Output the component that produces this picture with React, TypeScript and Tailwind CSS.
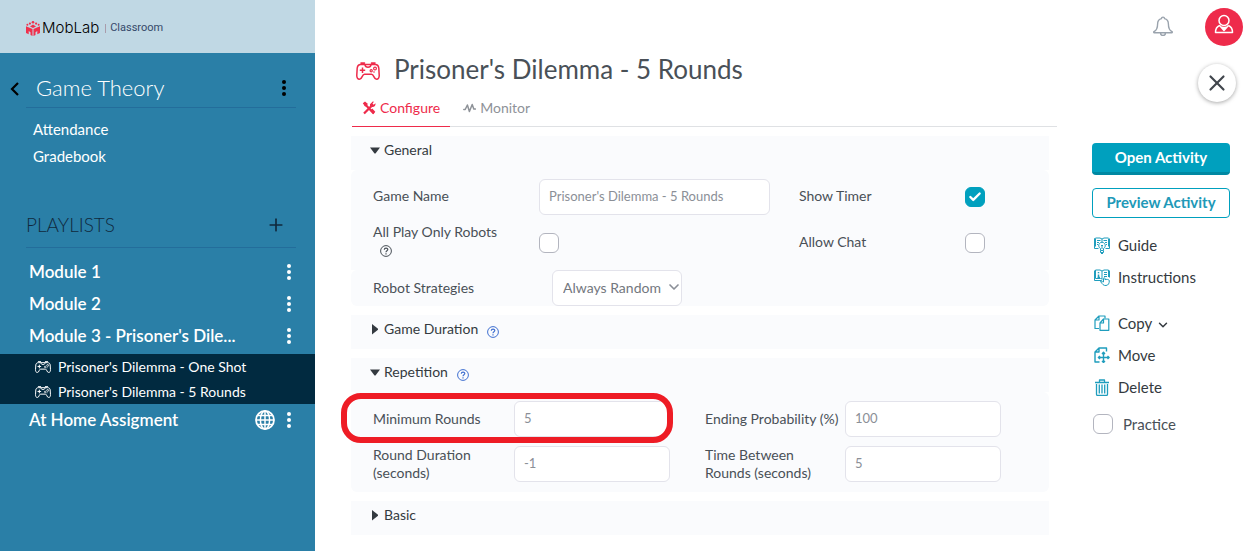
import React from 'react';
import { Check, ChevronDown, Plus, X } from 'lucide-react';

type IconProps = { className?: string };

function Gamepad({ className }: IconProps) {
  return (
    <svg viewBox="0 0 24 18" fill="none" stroke="currentColor" className={className} aria-hidden="true">
      <path
        strokeWidth="1.5"
        strokeLinecap="round"
        strokeLinejoin="round"
        d="M4.500 2.500C2.500 2.500 1.500 4 1.200 6L.8 13c-.2 2.500.9 4.200 2.700 4.200 3 0 2.300-5 5-5h7c2.700 0 2 5 5 5 1.800 0 2.900-1.700 2.700-4.200L22.800 6c-.3-2-1.300-3.500-3.300-3.500ZM5 1h3.500M15.500 1H19"
      />
      <path strokeWidth="1.500" d="M6.500 5.500v5.500M3.800 8.200h5.400M9 2.800c.3 2 1 2.400 3 2.400s2.700-.4 3-2.400" />
      <circle cx="15.200" cy="8.800" r="1.100" strokeWidth="1.200" />
      <circle cx="19" cy="6.600" r="1.400" strokeWidth="1.200" />
      <circle cx="18" cy="10" r=".8" fill="currentColor" stroke="none" />
    </svg>
  );
}

function LogoMark({ className }: IconProps) {
  return (
    <svg viewBox="0 0 14 15" fill="#f0304c" className={className} aria-hidden="true">
      <path d="M0 5.200 6.500 8v7l-2-1v-2.800L2.700 10v3.200L0 12ZM14 5.200 7.500 8v7l2-1v-2.800l1.800-1.200v3.200L14 12Z" />
      <path d="m7 3.600 3 1.800-3 1.500-3-1.500Z" />
      <circle cx="7" cy="1.300" r="1.300" />
      <circle cx="3.900" cy="2.600" r="1.100" />
      <circle cx="10.100" cy="2.600" r="1.100" />
      <circle cx="1.400" cy="3.800" r="1" />
      <circle cx="12.600" cy="3.800" r="1" />
    </svg>
  );
}

function GlobeIcon({ className }: IconProps) {
  return (
    <svg viewBox="0 0 20 20" fill="none" stroke="currentColor" strokeWidth="1.500" className={className} aria-hidden="true">
      <circle cx="10" cy="10" r="9" strokeWidth="1.800" />
      <ellipse cx="10" cy="10" rx="4.600" ry="9" />
      <path d="M10 1v18M1 10h18M2.500 5.500h15M2.500 14.500h15" />
    </svg>
  );
}

function BellIcon({ className }: IconProps) {
  return (
    <svg viewBox="0 0 20 20" fill="none" stroke="currentColor" strokeWidth="1.400" strokeLinejoin="round" className={className} aria-hidden="true">
      <path d="M8.500 2.600a1.500 1.500 0 0 1 3 0c2.700.7 3.900 3 3.900 5.400 0 4.300.6 6.200 3.600 7.700.5.300.4 1-.3 1H1.300c-.7 0-.8-.7-.3-1C4 14.200 4.600 12.300 4.600 8c0-2.400 1.200-4.700 3.900-5.400ZM7.500 17a2.500 2.500 0 0 0 5 0" />
    </svg>
  );
}

function UserIcon({ className }: IconProps) {
  return (
    <svg viewBox="0 0 20 20" fill="none" stroke="currentColor" strokeWidth="1.500" strokeLinejoin="round" className={className} aria-hidden="true">
      <circle cx="10" cy="6.500" r="5" />
      <path d="M5.600 11.500C3 12.500 1.500 14.500 1.500 18.500h17c0-4-1.500-6-4.100-7M5.600 11.500l4.400 5 4.400-5M7 13l3 .8 3-.8M10 14v2" />
    </svg>
  );
}

function ToolsIcon({ className }: IconProps) {
  return (
    <svg viewBox="0 0 14 14" className={className} aria-hidden="true">
      <path fill="none" stroke="currentColor" strokeWidth="2.200" d="M2.800 3 11.800 12.400M2 12.600 9.500 5" />
      <path fill="currentColor" d="M.8 2.200 3 .5l3 2.600L3.200 5.800ZM8 3.200 10.700.6 12 .8 10.500 2.500l1.200 1.200 1.800-1.400c.4 2.700-1.700 4.200-4 3.500L8 5ZM8.200 9.600l2-2 3.100 3.200-2 2.400Z" />
    </svg>
  );
}

function PulseIcon({ className }: IconProps) {
  return (
    <svg viewBox="0 0 13 10" fill="none" stroke="currentColor" strokeWidth="1.500" strokeLinejoin="round" strokeLinecap="round" className={className} aria-hidden="true">
      <path d="M.8 6.500h1.400L4.400 2l2 6.500L9.200 1.500l1.600 4.500h1.600" />
    </svg>
  );
}

function HelpIcon({ className }: IconProps) {
  return (
    <svg viewBox="0 0 12 12" fill="none" stroke="currentColor" className={className} aria-hidden="true">
      <circle cx="6" cy="6" r="5.400" strokeWidth="1" />
      <path strokeWidth="1.200" d="M4.300 4.800c0-2.200 3.500-2.200 3.500-.2C7.800 5.800 6 5.800 6 7.300M6 8.200v1.200" />
    </svg>
  );
}

function GuideIcon({ className }: IconProps) {
  return (
    <svg viewBox="0 0 16 17" fill="none" stroke="currentColor" strokeWidth="1" className={className} aria-hidden="true">
      <path d="M4.500 11.500H.5V1.500h1M15.500 1.500v10h-4M1.500 1.500v8M14.500 1.500v8M1.500 1H6l2 1 2-1h4.500M8 2v3M3 3.500h3.500M3 5.500h2M9.500 3.500H13M11 5.500h2M3 7.500h1M12 7.500h1" />
      <path d="M6.500 13v-1.500a3.300 3.300 0 1 1 3 0V13M6.500 13.500h3v2h-3ZM8 12V9M7 8.500h2M7 16.500h2" />
    </svg>
  );
}

function InstructionsIcon({ className }: IconProps) {
  return (
    <svg viewBox="0 0 16 17" fill="none" stroke="currentColor" strokeWidth="1" className={className} aria-hidden="true">
      <path d="M.5 1.500v10h7l1-.8M15.500 8.500v-7M1.500 1H6l2 1 2-1h4.500v7M1.500 1v8.500h5L8 10V2M10 3.500h3M10 5.500h3M10 7.500h3" />
      <path strokeWidth="1.500" d="M4.500 5.500v3M4.500 3v1.200M3.500 8.500h2.500" />
      <path d="M6.500 12.500c1-.7 2 .5 3 .5V9.500c0-1 1.500-1 1.500 0v1.200c1-.7 4.300-.3 4.300 1 0 2.500-.7 4.500-3.300 4.800-2.500.2-3.500-1.200-5.500-4Z" />
    </svg>
  );
}

function CopyIcon({ className }: IconProps) {
  return (
    <svg viewBox="0 0 16 16" fill="none" stroke="currentColor" strokeWidth="1.200" strokeLinejoin="round" className={className} aria-hidden="true">
      <path d="M5 13.500H1V5l4-4h6v2.500M5 1v4H1" />
      <path d="M9.500 4h5.300v11.300H6V8l3.500-4v4H6" />
    </svg>
  );
}

function MoveIcon({ className }: IconProps) {
  return (
    <svg viewBox="0 0 16 16" fill="none" stroke="currentColor" strokeWidth="1.400" strokeLinejoin="round" className={className} aria-hidden="true">
      <path d="M5.500 15H1V5l4-4h7.500v3.500M5 1v4H1" />
      <path d="M9.500 5.500v10M4.500 10.500h10.500M8 7l1.500-1.700L11 7M8 14l1.500 1.500L11 14M6 9l-1.600 1.500L6 12M13.500 9l1.600 1.500L13.500 12" />
    </svg>
  );
}

function TrashIcon({ className }: IconProps) {
  return (
    <svg viewBox="0 0 16 17" fill="none" stroke="currentColor" strokeWidth="1.300" strokeLinejoin="round" className={className} aria-hidden="true">
      <path d="M1 3.500h14M5.500 3V1h5v2M2.500 5v10.300c0 .7.400 1.200 1.200 1.200h8.600c.8 0 1.200-.5 1.200-1.200V5M5.300 5.500v9M8 5.500v9M10.700 5.500v9" />
    </svg>
  );
}

function Caret({ open }: { open?: boolean }) {
  return (
    <svg viewBox="0 0 12 12" fill="currentColor" className="mr-[3px] size-3" aria-hidden="true">
      <path d={open ? 'M1 3.500h10L6.500 9.500h-1Z' : 'M3 1v10.500l6-4.800v-1Z'} />
    </svg>
  );
}

function MoreButton({ label, className = '' }: { label: string; className?: string }) {
  return (
    <button type="button" aria-label={label} className={`flex w-4 shrink-0 justify-center ${className}`}>
      <svg viewBox="0 0 4 16" className="h-4 w-1" fill="currentColor" aria-hidden="true">
        <circle cx="2" cy="2" r="2" />
        <circle cx="2" cy="8" r="2" />
        <circle cx="2" cy="14" r="2" />
      </svg>
    </button>
  );
}

function ModuleRow({ title, published }: { title: string; published?: boolean }) {
  return (
    <li className="flex h-8 items-center pr-[18px] pl-[29px] text-white">
      <a href="#module" className="flex-1 text-[17px] leading-6 font-semibold">{title}</a>
      {published && <GlobeIcon className="mr-[6px] size-5" />}
      <MoreButton label={`${title} options`} />
    </li>
  );
}

function Checkbox({ id, checked }: { id: string; checked?: boolean }) {
  return (
    <span className="relative flex size-5 shrink-0">
      <input
        id={id}
        type="checkbox"
        defaultChecked={checked}
        className="peer size-5 appearance-none rounded-md border border-[#b3b5bf] bg-white checked:border-[#00a0be] checked:bg-[#00a0be]"
      />
      <Check className="pointer-events-none absolute top-[3px] left-[3px] hidden size-[14px] text-white peer-checked:block" strokeWidth={4} />
    </span>
  );
}

function TextField({ id, value }: { id: string; value: string }) {
  return (
    <input
      id={id}
      defaultValue={value}
      className="h-9 w-full min-w-0 rounded-md border border-[#e3e3eb] bg-white px-[9px] pb-[2px] text-[13px] text-[#8b8f97]"
    />
  );
}

function SectionHeader({ title, open, help }: { title: string; open?: boolean; help?: boolean }) {
  return (
    <div className="flex h-[34px] items-center bg-[#fafbfd] pb-[6px] text-[#343a40]">
      <button type="button" aria-expanded={!!open} className="flex items-center pl-[18px] text-sm">
        <Caret open={open} />
        {title}
      </button>
      {help && (
        <button type="button" aria-label={`About ${title}`} className="mt-[5px] ml-[9px] text-[#3f6fd0]">
          <HelpIcon className="size-3" />
        </button>
      )}
    </div>
  );
}

function Action({ icon, label, more }: { icon: React.ReactNode; label: string; more?: boolean }) {
  return (
    <button type="button" className="flex h-8 items-center text-[15px] text-[#343a40]">
      <span className="mr-2 text-[#1f9dbd]">{icon}</span>
      {label}
      {more && <ChevronDown className="mt-1 ml-1 size-[14px]" strokeWidth={2.5} />}
    </button>
  );
}

export default function App() {
  return (
    <div className="flex min-h-screen bg-white font-[Lato,sans-serif] text-[#495057]">
      <aside className="w-[315px] shrink-0 bg-[#2a7fa7]">
        <header className="flex h-[53px] items-center bg-[#c0d8e4] pt-1 pl-[26px]">
          <LogoMark className="mr-[2px] h-[15px] w-[14px]" />
          <span className="font-[Inter,sans-serif] text-[15px] font-light text-black">MobLab</span>
          <span className="mr-1 ml-[6px] h-[9px] w-px bg-[#a99cab]" />
          <span className="font-[Roboto,sans-serif] text-[11px] text-[#354869]">Classroom</span>
        </header>

        <div className="flex h-[55px] pl-2">
          <button type="button" aria-label="Back" className="mr-[3px] flex w-[15px] items-center pt-4 text-black">
            <svg viewBox="0 0 9 14" className="ml-[2px] h-[14px] w-[9px]" fill="none" stroke="currentColor" strokeWidth="2.200" aria-hidden="true">
              <path d="M8 1 2 7l6 6" />
            </svg>
          </button>
          <div className="mr-[19px] flex flex-1 items-center border-b border-[#236d9b] pt-4 pr-1 pl-[10px]">
            <h2 className="flex-1 pb-[2px] text-[22px] font-light text-white">Game Theory</h2>
            <MoreButton label="Course options" className="text-black" />
          </div>
        </div>
        <nav className="flex flex-col pt-2 pl-[33px] text-[15px] leading-[27px] text-white">
          <a href="#attendance">Attendance</a>
          <a href="#gradebook">Gradebook</a>
        </nav>

        <div className="mt-[33px] mr-[19px] mb-2 ml-[26px] flex h-[45px] items-center justify-between border-b border-[#236d9b] pr-[10px] text-[#10293d]">
          <h3 className="text-[19px] font-light">PLAYLISTS</h3>
          <button type="button" aria-label="Add playlist"><Plus className="size-5" /></button>
        </div>
        <ul>
          <ModuleRow title="Module 1" />
          <ModuleRow title="Module 2" />
          <ModuleRow title="Module 3 - Prisoner's Dile..." />
          <li className="pt-[2px]">
            <ul className="bg-[#012a40] text-sm leading-[25px] text-white">
              {["Prisoner's Dilemma - One Shot", "Prisoner's Dilemma - 5 Rounds"].map((name) => (
                <li key={name}>
                  <a href="#activity" className="flex items-center pl-[35px]">
                    <Gamepad className="mr-[7px] h-3 w-4" />
                    {name}
                  </a>
                </li>
              ))}
            </ul>
          </li>
          <ModuleRow title="At Home Assigment" published />
        </ul>
      </aside>

      <main className="min-w-0 flex-1 pt-[53px] pl-9">
        <h1 className="flex h-8 items-center pl-[5px] text-[26px]">
          <Gamepad className="mt-1 mr-[14px] h-[18px] w-6 text-[#ee2b4b]" />
          Prisoner's Dilemma - 5 Rounds
        </h1>
        <div role="tablist" className="ml-px mt-[5px] flex h-[37px] border-b border-[#dfe1e4] text-sm">
          <button type="button" role="tab" aria-selected="true" className="-mb-px flex items-center border-b border-[#ee2b4b] px-[10px] text-[#ee2b4b]">
            <ToolsIcon className="mr-1 size-[14px]" />
            Configure
          </button>
          <button type="button" role="tab" aria-selected="false" className="flex items-center px-[13px] text-[#8e9298]">
            <PulseIcon className="mr-1 h-[10px] w-[13px]" />
            Monitor
          </button>
        </div>

        <div className="mt-[9px] mr-2 flex flex-col gap-[9px] text-sm leading-[18px]">
          <section>
            <SectionHeader title="General" open />
            <div className="grid grid-cols-[166px_231px_1fr_84px] gap-y-px rounded-t-md bg-[#fafbfd] pt-[9px] pl-[22px]">
              <label htmlFor="game-name" className="pt-2">Game Name</label>
              <TextField id="game-name" value="Prisoner's Dilemma - 5 Rounds" />
              <label htmlFor="show-timer" className="pt-2 pl-[29px]">Show Timer</label>
              <div className="pt-2"><Checkbox id="show-timer" checked /></div>

              <div className="flex h-[54px] flex-col pt-[7px]">
                <label htmlFor="robots-only">All Play Only Robots</label>
                <button type="button" aria-label="About robots" className="mt-1 ml-[7px] size-3"><HelpIcon className="size-3" /></button>
              </div>
              <div className="pt-[17px]"><Checkbox id="robots-only" /></div>
              <label htmlFor="allow-chat" className="pt-[17px] pl-[29px]">Allow Chat</label>
              <div className="pt-[17px]"><Checkbox id="allow-chat" /></div>
            </div>
            <div className="flex h-9 items-center rounded-md bg-[#fafbfd] pl-[22px]">
              <label htmlFor="strategies" className="w-[179px]">Robot Strategies</label>
              <span className="relative">
                <select id="strategies" className="h-9 w-[130px] appearance-none rounded-md border border-[#e3e3eb] bg-white px-[10px] text-sm text-[#73777e]">
                  <option>Always Random</option>
                </select>
                <ChevronDown className="pointer-events-none absolute top-[9px] right-0 size-4 text-[#8b8f97]" strokeWidth={2.5} />
              </span>
            </div>
          </section>

          <section><SectionHeader title="Game Duration" help /></section>

          <section>
            <SectionHeader title="Repetition" open help />
            <div className="relative grid grid-cols-[141px_156px_1fr_156px] items-center gap-y-[9px] rounded-md bg-[#fafbfd] pt-[9px] pr-12 pb-[10px] pl-[22px]">
              <label htmlFor="min-rounds">Minimum Rounds</label>
              <TextField id="min-rounds" value="5" />
              <label htmlFor="ending" className="pl-[35px]">Ending Probability (%)</label>
              <TextField id="ending" value="100" />
              <label htmlFor="duration" className="w-28">Round Duration (seconds)</label>
              <TextField id="duration" value="-1" />
              <label htmlFor="between" className="w-40 pl-[35px]">Time Between Rounds (seconds)</label>
              <TextField id="between" value="5" />
              <div className="pointer-events-none absolute top-px -left-[10px] h-[50px] w-[332px] rounded-[20px] border-6 border-[#ee1c25]" />
            </div>
          </section>

          <section><SectionHeader title="Basic" /></section>
        </div>
      </main>

      <aside className="w-[202px] shrink-0 pt-2">
        <div className="flex items-center justify-end pr-4">
          <button type="button" aria-label="Notifications" className="mr-8 pb-[2px] text-[#9aa3ad]"><BellIcon className="size-5" /></button>
          <button type="button" aria-label="Account" className="flex size-[38px] items-center justify-center rounded-full bg-[#ee2b4b] pb-[6px] text-white">
            <UserIcon className="size-5" />
          </button>
        </div>
        <div className="mt-[18px] flex justify-end pr-[23px]">
          <button type="button" aria-label="Close" className="flex size-[38px] items-center justify-center rounded-full bg-white text-[#41464d] shadow-[0_1px_4px_rgba(0,0,0,0.35)]">
            <X className="size-[26px]" />
          </button>
        </div>
        <div className="mt-[41px] flex flex-col pr-[29px] pl-[35px]">
          <button type="button" className="h-8 rounded border-b-3 border-[#0088a2] bg-[#00a0be] text-[15px] font-bold text-white">Open Activity</button>
          <button type="button" className="mt-[13px] h-[30px] rounded border border-[#00a0be] pb-[2px] text-[15px] font-bold text-[#2199b8]">Preview Activity</button>
        </div>
        <div className="mt-[11px] flex flex-col items-start pl-[37px]">
          <Action icon={<GuideIcon className="h-[17px] w-4" />} label="Guide" />
          <Action icon={<InstructionsIcon className="h-[17px] w-4" />} label="Instructions" />
          <div className="h-[14px]" />
          <Action icon={<CopyIcon className="size-4" />} label="Copy" more />
          <Action icon={<MoveIcon className="size-4" />} label="Move" />
          <Action icon={<TrashIcon className="h-[17px] w-4" />} label="Delete" />
        </div>
        <div className="mt-[10px] flex items-center pl-9">
          <Checkbox id="practice" />
          <label htmlFor="practice" className="pl-[10px] text-[15px]">Practice</label>
        </div>
      </aside>
    </div>
  );
}
